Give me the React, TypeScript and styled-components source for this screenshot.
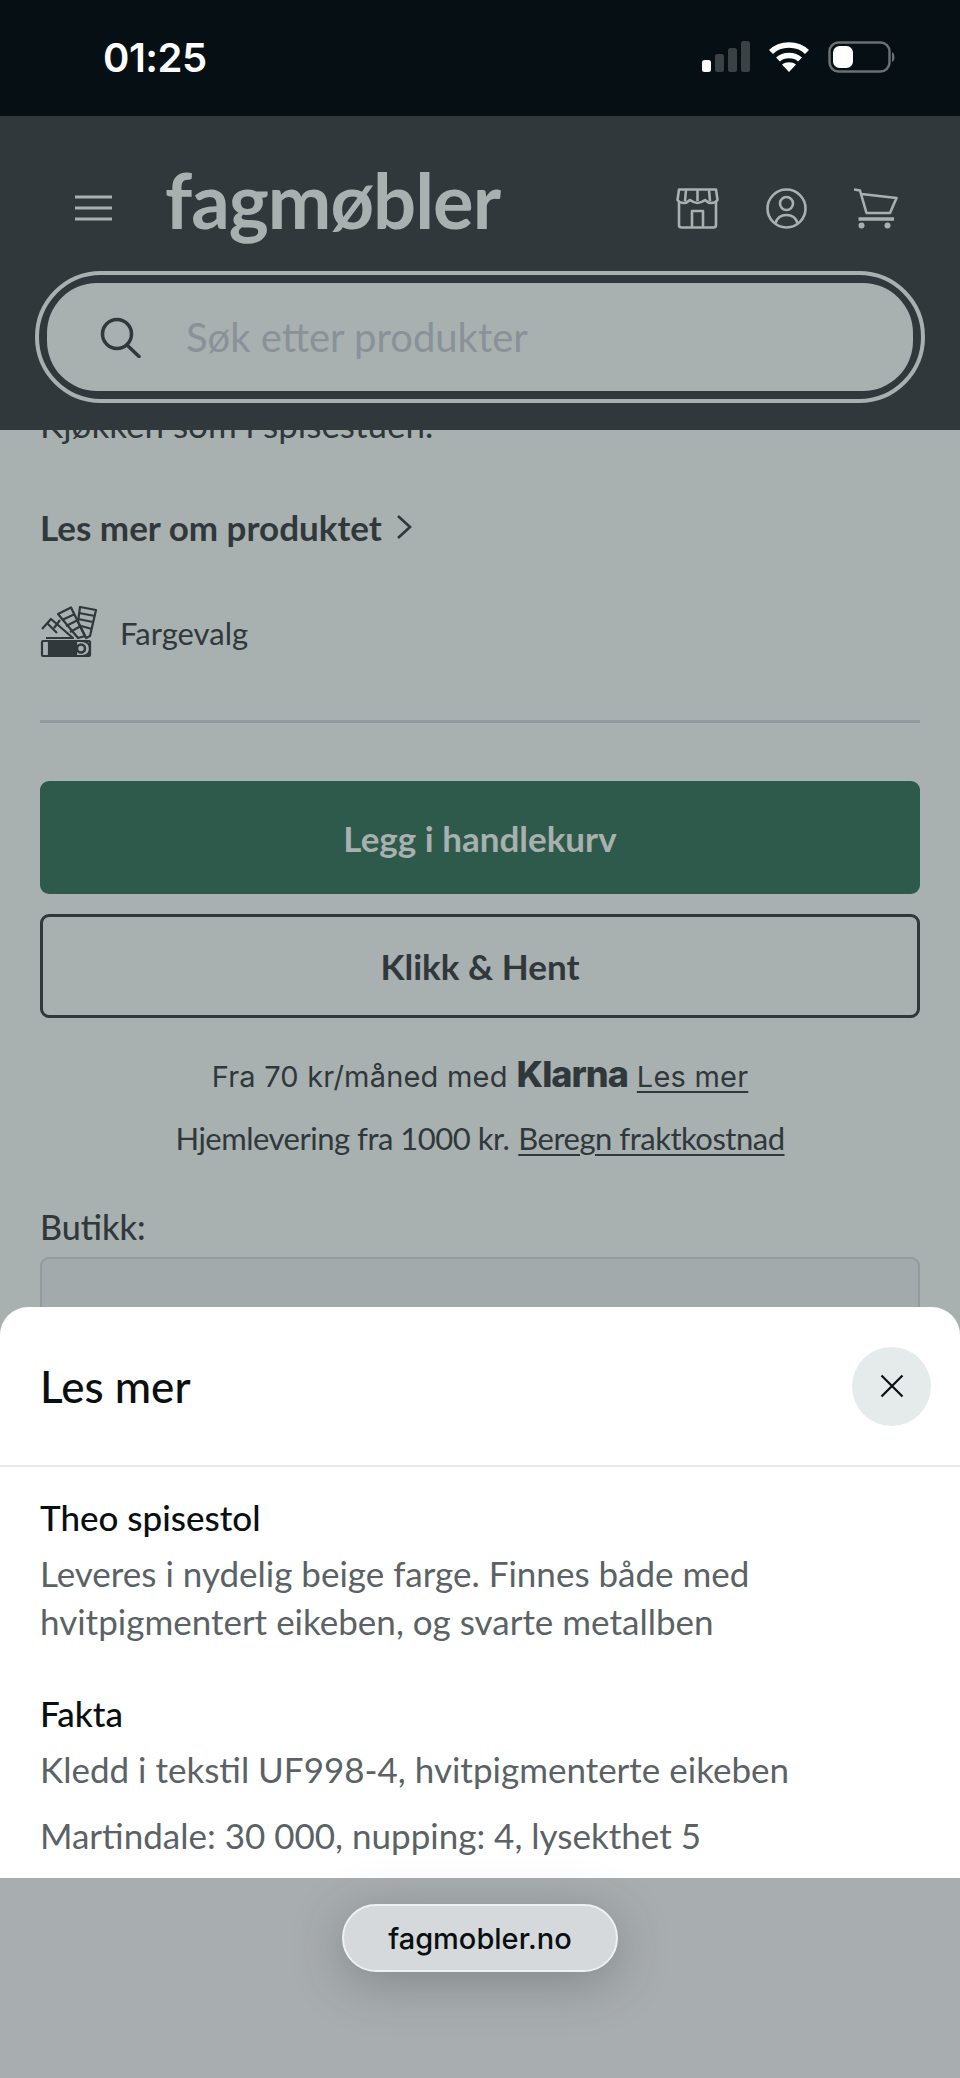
import React from "react";
import styled, { createGlobalStyle } from "styled-components";

const GlobalStyle = createGlobalStyle`
  html, body {
    margin: 0;
    padding: 0;
    width: 960px;
    height: 2078px;
    overflow: hidden;
    background: #a8b0b0;
    font-family: Lato, "Liberation Sans", sans-serif;
  }
  * { box-sizing: border-box; }
`;

const Page = styled.div`
  display: flex;
  flex-direction: column;
  width: 960px;
  height: 2078px;
  overflow: hidden;
`;

const StatusBar = styled.div`
  display: flex;
  align-items: center;
  height: 116px;
  padding: 0 64px 2px 103px;
  background: #060f13;
`;

const Time = styled.span`
  flex: 1;
  color: #fff;
  font-family: Inter, sans-serif;
  font-size: 40px;
  font-weight: 600;
  letter-spacing: -0.5px;
`;

const StatusIcons = styled.div`
  display: flex;
  align-items: center;
  gap: 18px;
`;

const Header = styled.header`
  height: 314px;
  padding: 52px 35px 0;
  background: #30383c;
`;

const HeaderTop = styled.div`
  display: flex;
  align-items: center;
  height: 80px;
  padding: 0 27px 0 40px;
`;

const Logo = styled.span`
  flex: 1;
  margin-left: 53px;
  color: #a8b0b0;
  font-family: Lato, sans-serif;
  font-size: 76px;
  font-weight: 700;
  line-height: 80px;
  letter-spacing: -1px;
  transform: translateY(-8px);
`;

const HeaderIcons = styled.div`
  display: flex;
  align-items: center;
  gap: 47px;
`;

const SearchRing = styled.div`
  margin-top: 23px;
  height: 132px;
  padding: 8px;
  border: 4px solid #a8b0b0;
  border-radius: 66px;
`;

const SearchField = styled.div`
  display: flex;
  align-items: center;
  gap: 44px;
  height: 100%;
  padding: 0 0 0 53px;
  background: #a8b0b0;
  border-radius: 50px;
`;

const Placeholder = styled.span`
  color: #8a9199;
  font-size: 40px;
`;

const Content = styled.main`
  display: flex;
  flex-direction: column;
  height: 907px;
  padding: 0 40px;
  overflow: hidden;
`;

const ClippedLine = styled.div`
  display: flex;
  align-items: flex-end;
  height: 17px;
  overflow: hidden;
  color: #30383c;
  font-size: 35px;
  line-height: 44px;
  white-space: nowrap;
`;

const MoreLink = styled.div`
  display: flex;
  align-items: center;
  gap: 14px;
  margin-top: 60px;
  height: 46px;
  color: #30383c;
  font-size: 35px;
  font-weight: 700;
`;

const ColorRow = styled.div`
  display: flex;
  align-items: center;
  gap: 22px;
  margin-top: 57px;
  height: 54px;
  color: #30383c;
  font-size: 31px;
`;

const Divider = styled.hr`
  margin: 60px 0 0;
  height: 3px;
  border: 0;
  background: #939aa0;
`;

const Button = styled.div<{ $primary?: boolean }>`
  display: flex;
  align-items: center;
  justify-content: center;
  height: ${({ $primary }) => ($primary ? "121px" : "110px")};
  margin-top: ${({ $primary }) => ($primary ? "58px" : "20px")};
  border-radius: 9px;
  background: ${({ $primary }) => ($primary ? "#2e5a4b" : "transparent")};
  border: ${({ $primary }) => ($primary ? "none" : "3px solid #30383c")};
  color: ${({ $primary }) => ($primary ? "#a8b0b0" : "#30383c")};
  font-size: 35px;
  font-weight: 700;
`;

const InfoLine = styled.div<{ $klarna?: boolean }>`
  display: flex;
  align-items: baseline;
  justify-content: center;
  gap: 9px;
  height: 44px;
  margin-top: ${({ $klarna }) => ($klarna ? "34px" : "23px")};
  color: #30383c;
  font-family: ${({ $klarna }) => ($klarna ? "Inter, sans-serif" : "Lato, sans-serif")};
  font-size: ${({ $klarna }) => ($klarna ? "29px" : "31px")};
  letter-spacing: ${({ $klarna }) => ($klarna ? "0.2px" : "-0.5px")};
`;

const Klarna = styled.span`
  font-size: 36px;
  font-weight: 800;
  letter-spacing: -1px;
`;

const InfoLink = styled.span`
  text-decoration: underline;
  text-decoration-thickness: 2px;
  text-underline-offset: 4px;
`;

const StoreLabel = styled.div`
  margin-top: 46px;
  height: 44px;
  color: #30383c;
  font-size: 34px;
  font-weight: 500;
`;

const StoreSelect = styled.div`
  margin-top: 10px;
  height: 80px;
  flex-shrink: 0;
  background: #a3aaac;
  border: 2px solid #939aa0;
  border-radius: 9px;
`;

const Sheet = styled.section`
  position: relative;
  display: flex;
  flex-direction: column;
  height: 571px;
  margin-top: -30px;
  background: #fff;
  border-radius: 28px 28px 0 0;
`;

const SheetHeader = styled.div`
  display: flex;
  align-items: center;
  justify-content: space-between;
  height: 160px;
  padding: 0 29px 0 40px;
  border-bottom: 2px solid #e8eaea;
`;

const SheetTitle = styled.h2`
  margin: 0;
  color: #0a0f12;
  font-size: 44px;
  font-weight: 500;
`;

const CloseButton = styled.div`
  display: flex;
  align-items: center;
  justify-content: center;
  width: 79px;
  height: 79px;
  border-radius: 50%;
  background: #e5eaea;
`;

const SheetBody = styled.div`
  display: flex;
  flex-direction: column;
  padding: 26px 40px 0;
`;

const SectionTitle = styled.h3<{ $spaced?: boolean }>`
  margin: ${({ $spaced }) => ($spaced ? "44px 0 0" : "0")};
  color: #0a0f12;
  font-size: 35px;
  font-weight: 500;
  line-height: 48px;
`;

const SheetText = styled.p<{ $gap?: number }>`
  margin: ${({ $gap }) => $gap ?? 8}px 0 0;
  color: #5a6266;
  font-size: 35px;
  line-height: 48px;
`;

const BottomBar = styled.footer`
  position: relative;
  display: flex;
  justify-content: center;
  height: 200px;
  padding-top: 26px;
  background: #a8adaf;
`;

const UrlPill = styled.div`
  display: flex;
  align-items: center;
  justify-content: center;
  width: 276px;
  height: 68px;
  border: 2px solid #eef1f2;
  border-radius: 34px;
  background: #d5d9dc;
  box-shadow: 0 10px 50px rgba(60, 65, 70, 0.35);
  color: #0a0f12;
  font-family: Inter, sans-serif;
  font-size: 29px;
  font-weight: 500;
`;

const SignalIcon = () => (
  <svg width="48" height="32" viewBox="0 0 48 32">
    <rect x="0" y="19" width="9" height="12" rx="2.5" fill="#fff" />
    <rect x="13" y="13" width="9" height="18" rx="2.5" fill="#3a4245" />
    <rect x="26" y="7" width="9" height="24" rx="2.5" fill="#3a4245" />
    <rect x="39" y="0" width="9" height="31" rx="2.5" fill="#3a4245" />
  </svg>
);

const WifiIcon = () => (
  <svg width="42" height="32" viewBox="0 0 42 32" fill="none" stroke="#fff" strokeWidth="5.5">
    <path d="M3 11 C12 1.500 30 1.500 39 11" />
    <path d="M10 18.500 C15.500 13 26.500 13 32 18.500" />
    <path d="M21 31 L14 23.500 C18 20.500 24 20.500 28 23.500 Z" fill="#fff" stroke="none" />
  </svg>
);

const BatteryIcon = () => (
  <svg width="68" height="32" viewBox="0 0 68 32">
    <rect x="1.500" y="1.500" width="60" height="29" rx="9" fill="none" stroke="#6b7072" strokeWidth="2.500" />
    <rect x="5" y="5" width="20" height="22" rx="6.500" fill="#fff" />
    <path d="M64 11 C67 12 67.500 20 64 21 Z" fill="#6b7072" />
  </svg>
);

const MenuIcon = () => (
  <svg width="37" height="26" viewBox="0 0 37 26" stroke="#a8b0b0" strokeWidth="2.800">
    <line x1="0" y1="2" x2="37" y2="2" />
    <line x1="0" y1="13" x2="37" y2="13" />
    <line x1="0" y1="24" x2="37" y2="24" />
  </svg>
);

const StoreIcon = () => (
  <svg width="43" height="41" viewBox="0 0 43 41" fill="none" stroke="#a8b0b0" strokeWidth="2.600" strokeLinejoin="round">
    <path d="M3 13 L3 37 Q3 39.500 5.500 39.500 L37.500 39.500 Q40 39.500 40 37 L40 13" />
    <path d="M3 1.500 L40 1.500 L41.500 12 Q39 15 35.500 15 Q32 15 29 12 Q25 15 21.500 15 Q18 15 14 12 Q11 15 7.500 15 Q4 15 1.500 12 Z" />
    <path d="M10 2 L9 13 M21.500 2 L21.500 13 M33 2 L34 13" />
    <path d="M16 39 L16 23 L27 23 L27 39" />
  </svg>
);

const UserIcon = () => (
  <svg width="41" height="41" viewBox="0 0 41 41" fill="none" stroke="#a8b0b0" strokeWidth="2.600">
    <circle cx="20.500" cy="20.500" r="19" />
    <circle cx="20.500" cy="15.500" r="6.500" />
    <path d="M9.500 35 Q12 27 20.500 27 Q29 27 31.500 35" />
  </svg>
);

const CartIcon = () => (
  <svg width="44" height="41" viewBox="0 0 44 41" fill="none" stroke="#a8b0b0" strokeWidth="2.600" strokeLinejoin="round">
    <path d="M0 1.500 L6 2.500 L12.500 25 L36 25 L42.500 10 L7.500 6" />
    <path d="M4.500 31 L40 31" strokeWidth="3.500" />
    <circle cx="7.500" cy="37.500" r="3" fill="#a8b0b0" stroke="none" />
    <circle cx="33.500" cy="37.500" r="3" fill="#a8b0b0" stroke="none" />
  </svg>
);

const SearchIcon = () => (
  <svg width="42" height="41" viewBox="0 0 42 41" fill="none" stroke="#30383c" strokeWidth="3.500" strokeLinecap="round">
    <circle cx="17" cy="17" r="14.500" />
    <line x1="27" y1="28" x2="39" y2="39.500" />
  </svg>
);

const ChevronIcon = () => (
  <svg width="16" height="26" viewBox="0 0 16 26" fill="none" stroke="#30383c" strokeWidth="2.600">
    <path d="M2 2 L14 13 L2 24" />
  </svg>
);

const SwatchIcon = () => (
  <svg width="58" height="54" viewBox="0 0 58 54" fill="none" stroke="#30383c" strokeWidth="2.200" strokeLinejoin="round">
    <path d="M40 1 L56 4 L50 30 L46 32 L38 16 Z" />
    <path d="M39 7 L55 10 M38 13 L53 16 M41 20 L52 23" />
    <path d="M18 8 L31 1.500 L45 30 L38 32 Z" />
    <path d="M22 14 L35 8 M26 20 L38 14 M30 26 L41 20" />
    <path d="M2 23 L11 13 L33 32 L6 32" />
    <path d="M7 17 L17 27 M14 22 L20 14" />
    <rect x="2" y="35" width="48" height="15" rx="1" />
    <path d="M42 35 Q50 36 50 42.500 Q50 50 42 50" />
    <rect x="9" y="35" width="27" height="15" fill="#30383c" />
    <circle cx="41" cy="42.500" r="4" strokeWidth="2.500" />
  </svg>
);

const CloseIcon = () => (
  <svg width="24" height="24" viewBox="0 0 24 24" fill="none" stroke="#0a0f12" strokeWidth="2.200">
    <path d="M1.500 1.500 L22.500 22.500 M22.500 1.500 L1.500 22.500" />
  </svg>
);

const App = () => (
  <>
    <GlobalStyle />
    <Page>
      <StatusBar>
        <Time>01:25</Time>
        <StatusIcons>
          <SignalIcon />
          <WifiIcon />
          <BatteryIcon />
        </StatusIcons>
      </StatusBar>

      <Header>
        <HeaderTop>
          <MenuIcon />
          <Logo>fagmøbler</Logo>
          <HeaderIcons>
            <StoreIcon />
            <UserIcon />
            <CartIcon />
          </HeaderIcons>
        </HeaderTop>
        <SearchRing>
          <SearchField>
            <SearchIcon />
            <Placeholder>Søk etter produkter</Placeholder>
          </SearchField>
        </SearchRing>
      </Header>

      <Content>
        <ClippedLine>Kjøkken som i spisestuen.</ClippedLine>
        <MoreLink>
          Les mer om produktet
          <ChevronIcon />
        </MoreLink>
        <ColorRow>
          <SwatchIcon />
          Fargevalg
        </ColorRow>
        <Divider />
        <Button $primary>Legg i handlekurv</Button>
        <Button>Klikk &amp; Hent</Button>
        <InfoLine $klarna>
          Fra 70 kr/måned med <Klarna>Klarna</Klarna> <InfoLink>Les mer</InfoLink>
        </InfoLine>
        <InfoLine>
          Hjemlevering fra 1000 kr. <InfoLink>Beregn fraktkostnad</InfoLink>
        </InfoLine>
        <StoreLabel>Butikk:</StoreLabel>
        <StoreSelect />
      </Content>

      <Sheet>
        <SheetHeader>
          <SheetTitle>Les mer</SheetTitle>
          <CloseButton>
            <CloseIcon />
          </CloseButton>
        </SheetHeader>
        <SheetBody>
          <SectionTitle>Theo spisestol</SectionTitle>
          <SheetText>
            Leveres i nydelig beige farge. Finnes både med
            <br />
            hvitpigmentert eikeben, og svarte metallben
          </SheetText>
          <SectionTitle $spaced>Fakta</SectionTitle>
          <SheetText>Kledd i tekstil UF998-4, hvitpigmenterte eikeben</SheetText>
          <SheetText $gap={18}>Martindale: 30 000, nupping: 4, lysekthet 5</SheetText>
        </SheetBody>
      </Sheet>

      <BottomBar>
        <UrlPill>fagmobler.no</UrlPill>
      </BottomBar>
    </Page>
  </>
);

export default App;
